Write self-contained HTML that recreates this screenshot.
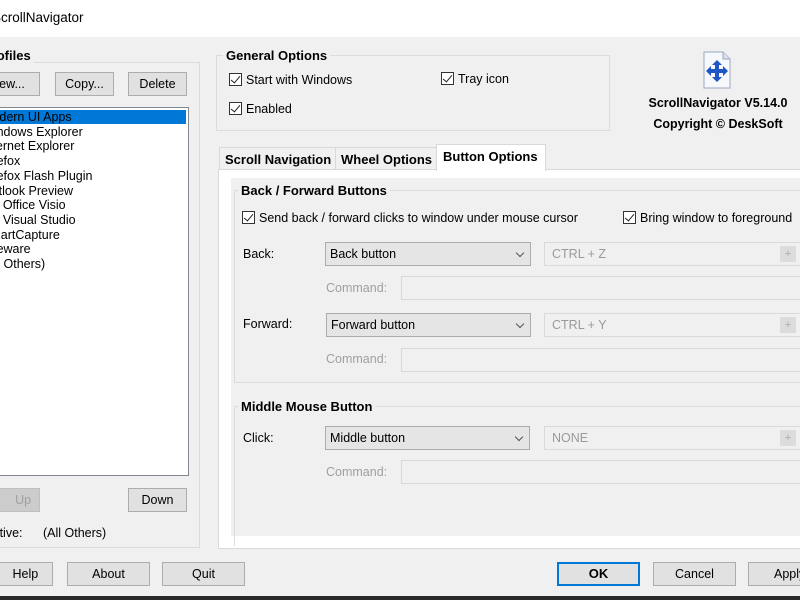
<!DOCTYPE html>
<html><head><style>
*{box-sizing:border-box;margin:0;padding:0}
body{width:800px;height:600px;overflow:hidden;background:#f0f0f0;font-family:"Liberation Sans",sans-serif;font-size:12.5px;color:#000;position:relative}
.a{position:absolute;white-space:nowrap}
.btn{position:absolute;background:#e1e1e1;border:1px solid #adadad;text-align:center;line-height:22px;height:24px}
.grp{position:absolute;border:1px solid #dcdcdc}
.gt{position:absolute;background:#f0f0f0;font-weight:bold;font-size:13px;padding:0 3px}
.cb{position:absolute;width:13px;height:13px;border:1px solid #333;background:#fff}
.cb::after{content:"";position:absolute;left:3px;top:0px;width:4px;height:8px;border:solid #222;border-width:0 1.5px 1.5px 0;transform:rotate(40deg)}
.combo{position:absolute;background:#e5e5e5;border:1px solid #acacac;height:24px;line-height:22px;padding-left:4px}
.combo::after{content:"";position:absolute;right:7px;top:7px;width:5px;height:5px;border:solid #555;border-width:0 1px 1px 0;transform:rotate(45deg)}
.fld{position:absolute;border:1px solid #d9d9d9;background:#f0f0f0;height:24px;line-height:22px;padding-left:7px;color:#9a9a9a}
.plus{position:absolute;right:3px;top:3px;width:16px;height:16px;background:#dcdcdc;color:#aaa;text-align:center;line-height:16px;font-size:11px}
.gray{color:#a0a0a0}
</style></head><body>
<div class="a" style="left:0;top:0;width:800px;height:37px;background:#fff"></div>
<div class="a" style="left:-8px;top:10px;font-size:13.5px">ScrollNavigator</div>

<div class="grp" style="left:-5px;top:62px;width:205px;height:486px"></div>
<div class="gt" style="left:-20px;top:48px">Profiles</div>
<div class="btn" style="left:-25px;top:72px;width:65px">New...</div>
<div class="btn" style="left:55px;top:72px;width:59px">Copy...</div>
<div class="btn" style="left:128px;top:72px;width:59px">Delete</div>
<div class="a" style="left:-5px;top:107px;width:194px;height:369px;background:#fff;border:1px solid #828790"></div>
<div class="a" style="left:-3px;top:110px;width:189px;height:14px;background:#0078d7"></div>
<div class="a" style="left:-18px;top:110px;line-height:14.7px;font-size:12.5px">
<div>Modern UI Apps</div><div>Windows Explorer</div><div>Internet Explorer</div><div>Firefox</div><div>Firefox Flash Plugin</div><div>Outlook Preview</div><div>&nbsp;&nbsp;&nbsp;&nbsp;&nbsp;&nbsp;Office Visio</div><div>&nbsp;&nbsp;&nbsp;&nbsp;&nbsp;&nbsp;Visual Studio</div><div>SmartCapture</div><div>Fireware</div><div>(All Others)</div></div>
<div class="btn gray" style="left:-25px;top:488px;width:65px;background:#ccc;border-color:#bfbfbf">&nbsp;&nbsp;&nbsp;&nbsp;&nbsp;&nbsp;&nbsp;&nbsp;&nbsp;Up</div>
<div class="btn" style="left:128px;top:488px;width:59px">Down</div>
<div class="a" style="left:-15px;top:526px">Active:</div>
<div class="a" style="left:43px;top:526px">(All Others)</div>

<div class="grp" style="left:216px;top:55px;width:394px;height:76px"></div>
<div class="gt" style="left:223px;top:48px">General Options</div>
<div class="cb" style="left:229px;top:73px"></div><div class="a" style="left:246px;top:73px">Start with Windows</div>
<div class="cb" style="left:441px;top:72px"></div><div class="a" style="left:458px;top:72px">Tray icon</div>
<div class="cb" style="left:229px;top:102px"></div><div class="a" style="left:246px;top:102px">Enabled</div>

<svg class="a" style="left:700px;top:51px" width="34" height="38" viewBox="0 0 34 38"><path d="M4 1h19l7 7v29H4z" fill="#f6f8fc" stroke="#9aa8c0"/><path d="M23 1v7h7" fill="#dde" stroke="#9aa8c0"/><path d="M17 9l5 5h-3v4h4v-3l5 5-5 5v-3h-4v4h3l-5 5-5-5h3v-4h-4v3l-5-5 5-5v3h4v-4h-3z" fill="#1e56c8"/></svg>
<div class="a" style="left:620px;top:93px;width:196px;text-align:center;font-weight:bold;font-size:12.5px;line-height:21px">ScrollNavigator V5.14.0<br>Copyright © DeskSoft</div>

<div class="a" style="left:218px;top:169px;width:590px;height:380px;background:#fff;border:1px solid #d9d9d9"></div>
<div class="a" style="left:231px;top:178px;width:580px;height:358px;background:#f0f0f0"></div>
<div class="a" style="left:219px;top:147px;width:117px;height:23px;border:1px solid #d9d9d9;background:#f0f0f0;font-weight:bold;font-size:13px;padding:4px 0 0 5px">Scroll Navigation</div>
<div class="a" style="left:335px;top:147px;width:102px;height:23px;border:1px solid #d9d9d9;background:#f0f0f0;font-weight:bold;font-size:13px;padding:4px 0 0 5px">Wheel Options</div>
<div class="a" style="left:436px;top:144px;width:110px;height:27px;border:1px solid #d9d9d9;border-bottom:none;background:#fff;font-weight:bold;font-size:13px;padding:4px 0 0 6px">Button Options</div>

<div class="grp" style="left:234px;top:190px;width:580px;height:193px"></div>
<div class="gt" style="left:238px;top:183px">Back / Forward Buttons</div>
<div class="cb" style="left:242px;top:211px"></div><div class="a" style="left:259px;top:211px">Send back / forward clicks to window under mouse cursor</div>
<div class="cb" style="left:623px;top:211px"></div><div class="a" style="left:640px;top:211px">Bring window to foreground</div>
<div class="a" style="left:243px;top:247px">Back:</div>
<div class="combo" style="left:325px;top:242px;width:206px">Back button</div>
<div class="fld" style="left:544px;top:242px;width:260px">CTRL + Z<div class="plus" style="right:7px">+</div></div>
<div class="a gray" style="left:326px;top:281px">Command:</div>
<div class="fld" style="left:401px;top:276px;width:405px"></div>
<div class="a" style="left:243px;top:317px">Forward:</div>
<div class="combo" style="left:326px;top:313px;width:205px">Forward button</div>
<div class="fld" style="left:544px;top:313px;width:260px">CTRL + Y<div class="plus" style="right:7px">+</div></div>
<div class="a gray" style="left:326px;top:352px">Command:</div>
<div class="fld" style="left:401px;top:348px;width:405px"></div>

<div class="grp" style="left:234px;top:406px;width:580px;height:140px;border-bottom:none"></div>
<div class="gt" style="left:238px;top:399px">Middle Mouse Button</div>
<div class="a" style="left:243px;top:431px">Click:</div>
<div class="combo" style="left:325px;top:426px;width:205px">Middle button</div>
<div class="fld" style="left:544px;top:426px;width:260px">NONE<div class="plus" style="right:7px">+</div></div>
<div class="a gray" style="left:326px;top:465px">Command:</div>
<div class="fld" style="left:401px;top:460px;width:405px"></div>

<div class="btn" style="left:-30px;top:562px;width:83px">&nbsp;&nbsp;&nbsp;&nbsp;&nbsp;&nbsp;&nbsp;&nbsp;Help</div>
<div class="btn" style="left:67px;top:562px;width:83px">About</div>
<div class="btn" style="left:162px;top:562px;width:83px">Quit</div>
<div class="btn" style="left:557px;top:562px;width:83px;border:2px solid #0078d7;font-weight:bold;font-size:13px;line-height:20px">OK</div>
<div class="btn" style="left:653px;top:562px;width:83px">Cancel</div>
<div class="btn" style="left:748px;top:562px;width:83px;text-align:left;padding-left:25px">Apply</div>
<div class="a" style="left:0;top:596px;width:800px;height:4px;background:#2a2a2a"></div>
</body></html>
